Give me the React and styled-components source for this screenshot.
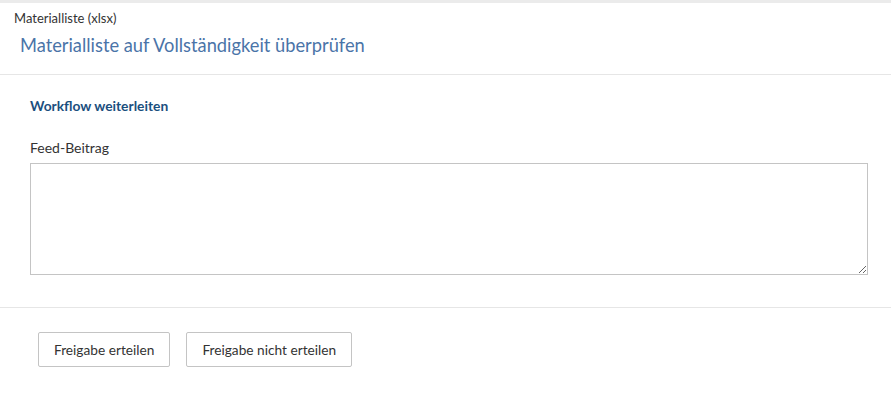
import React from "react"
import styled, { createGlobalStyle } from "styled-components"

const GlobalStyle = createGlobalStyle`
  body {
    margin: 0;
    background: #ffffff;
    font-family: Lato, "Open Sans", sans-serif;
    color: #333333;
  }
`

const Page = styled.div`
  border-top: 3px solid #ebebeb;
  width: 891px;
`

const Header = styled.div`
  padding: 7px 14px 0;
  height: 72px;
  border-bottom: 1px solid #e6e6e6;
  box-sizing: border-box;
`

const Caption = styled.div`
  font-size: 13px;
  line-height: 16px;
  color: #333;
`

const Title = styled.h1`
  margin: 8px 0 0 6px;
  font-size: 18.3px;
  line-height: 22px;
  font-weight: 400;
  color: #4a74a8;
`

const Body = styled.div`
  padding: 22px 23px 32px 30px;
  border-bottom: 1px solid #e6e6e6;
`

const SectionTitle = styled.h2`
  margin: 0;
  font-size: 13.8px;
  line-height: 18px;
  font-weight: 700;
  color: #1b4f7e;
`

const Label = styled.label`
  display: block;
  margin-top: 24px;
  font-size: 14px;
  line-height: 18px;
`

const Textarea = styled.textarea`
  display: block;
  margin-top: 6px;
  width: 100%;
  height: 112px;
  box-sizing: border-box;
  border: 1px solid #c4c4c4;
  border-radius: 0;
  font: inherit;
  padding: 6px;
`

const Actions = styled.div`
  display: flex;
  gap: 16px;
  padding: 24px 38px;
`

const Button = styled.button`
  height: 35px;
  padding: 0 15px;
  background: #fff;
  border: 1px solid #c4c4c4;
  border-radius: 2px;
  font-family: inherit;
  font-size: 13.7px;
  color: #333;
`

export default function App() {
  return (
    <Page>
      <GlobalStyle />
      <Header>
        <Caption>Materialliste (xlsx)</Caption>
        <Title>Materialliste auf Vollständigkeit überprüfen</Title>
      </Header>
      <Body>
        <SectionTitle>Workflow weiterleiten</SectionTitle>
        <Label htmlFor="feed">Feed-Beitrag</Label>
        <Textarea id="feed" />
      </Body>
      <Actions>
        <Button>Freigabe erteilen</Button>
        <Button>Freigabe nicht erteilen</Button>
      </Actions>
    </Page>
  )
}
